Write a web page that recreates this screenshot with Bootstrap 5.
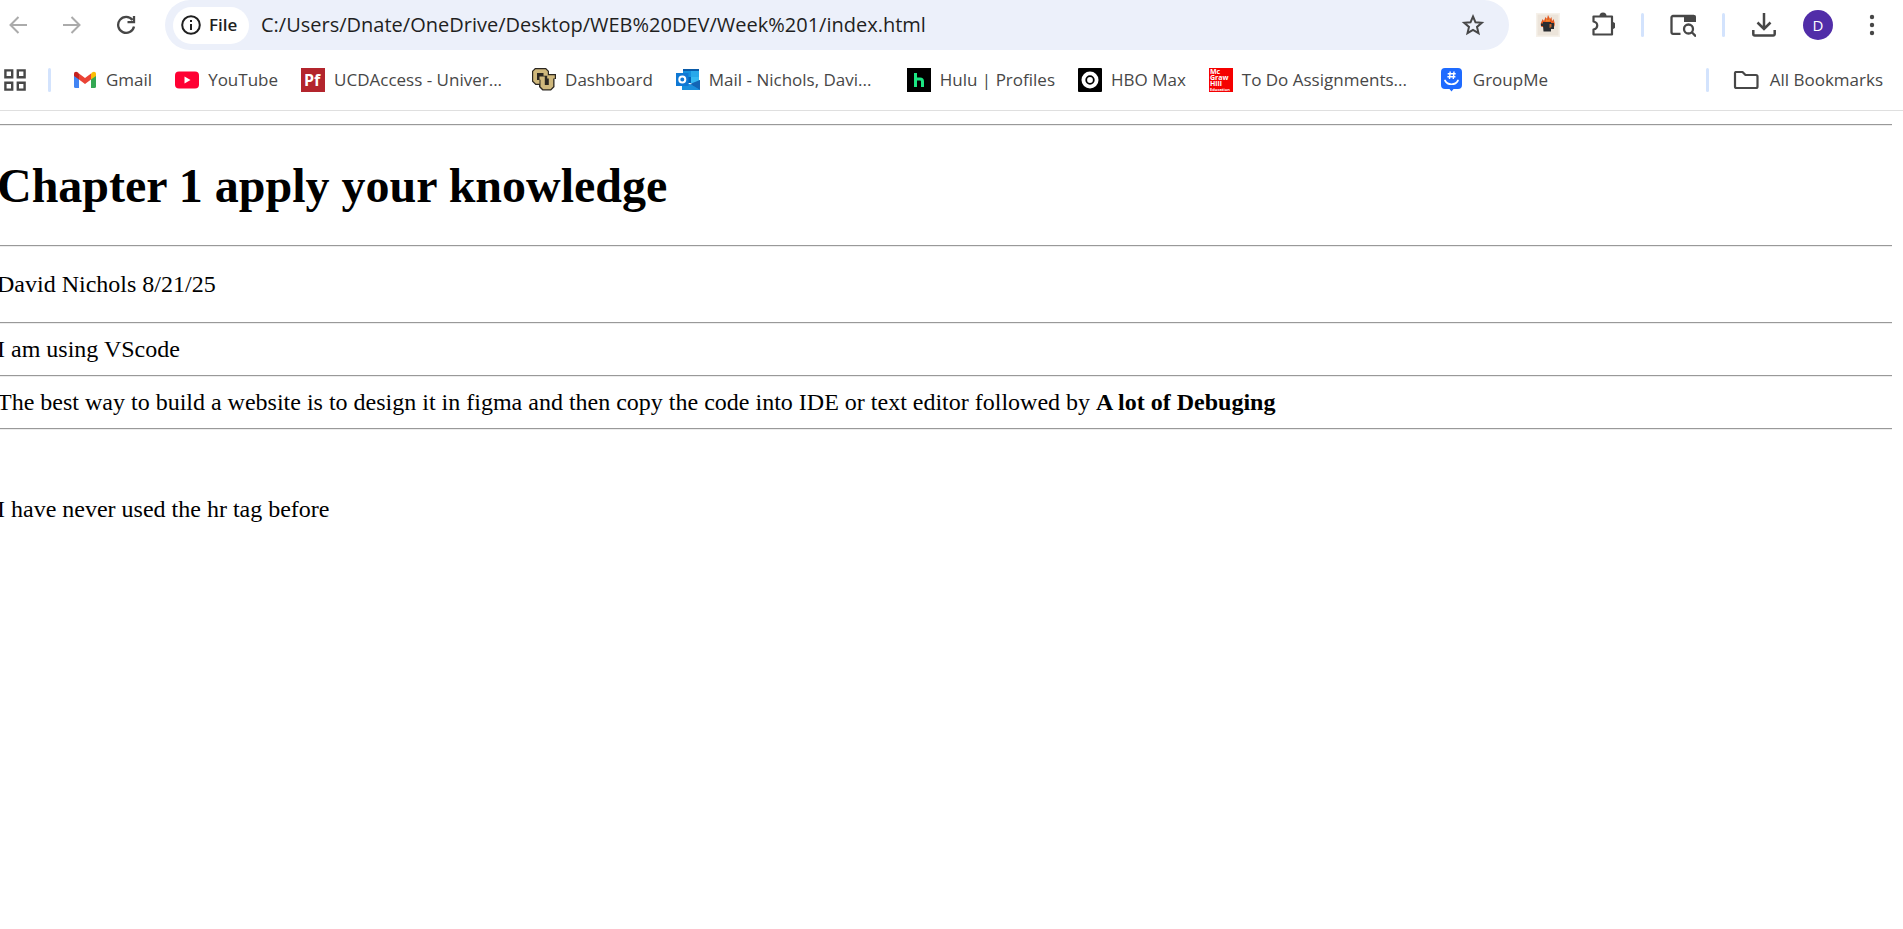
<!DOCTYPE html>
<html lang="en">
<head>
<meta charset="utf-8">
<meta name="viewport" content="width=device-width, initial-scale=1">
<title>index.html</title>
<link href="https://cdn.jsdelivr.net/npm/bootstrap@5.3.0/dist/css/bootstrap.min.css" rel="stylesheet">
<style>
  body { font-family: "Open Sans", "Noto Sans", sans-serif; color: #000; background: #fff; overflow-x: hidden; }
  .toolbar { height: 50px; padding-right: 4px; }
  .nav-keys { gap: 18px; margin-right: 21px; }
  .tool { width: 54px; height: 50px; padding: 0; border: 0; background: none; color: #474747; display: flex; align-items: center; justify-content: center; }
  .nav-keys .tool { width: 36px; }
  .nav-keys .tool:disabled { color: #ababab; }
  .divider { width: 3px; height: 24px; border-radius: 2px; background: #d3e3fd; flex: none; }
  .toolbar .divider { margin: 0 12px; }
  .omnibox { height: 50px; border-radius: 25px; background: #ecf0fa; padding-left: 8px; margin-right: 12px; min-width: 0; }
  .chip { height: 37px; width: 76px; border: 0; border-radius: 19px; background: #fff; color: #1f1f1f; font-size: 17px; font-weight: 600; padding: 0 8px; gap: 8px; flex: none; }
  .url { border: 0; background: none; outline: 0; font-size: 20px; color: #1f1f1f; padding: 0 0 2px; margin-left: 12px; min-width: 0; height: 48px; }
  .omnibox .tool { width: 72px; flex: none; }
  .avatar { width: 30px; height: 30px; background: #512da8; color: #fff; font-size: 15px; line-height: 30px; }
  .bookmarks { height: 61px; border-bottom: 1px solid #dfdfdf; padding: 0 20px 1px 3px; }
  .bookmarks a { color: #474747; text-decoration: none; font-size: 17px; line-height: 24px; gap: 9px; white-space: nowrap; }
  .bookmarks .folder { gap: 11px; }
  .bookmarks .apps { margin-right: 21px; }
  .marks { gap: 23px; margin-left: 22px; }
  .marks .long { width: 208px; }
  .bookmarks svg { flex: none; }
  .document { font-family: "Liberation Serif", "Times New Roman", serif; font-size: 24px; line-height: 27px; margin: 0 11px 0 -3px; padding-top: 1px; }
  .document hr { margin: 12px 0; border: 0; border-top: 1px solid #999; border-bottom: 1px solid #ededed; height: 2px; opacity: 1; }
  .document h1 { font-size: 48px; font-weight: 700; line-height: 55px; margin: 32px 0; }
  .document p { margin: 24px 0; }
</style>
</head>
<body>
<header>
  <div class="toolbar d-flex align-items-center">
    <div class="nav-keys d-flex">
      <button class="tool" disabled aria-label="Back"><svg width="18" height="18" viewBox="0 0 18 18" fill="none" stroke="currentColor" stroke-width="2"><path d="M18 9H1.500M9.500 1 1.500 9l8 8"/></svg></button>
      <button class="tool" disabled aria-label="Forward"><svg width="18" height="18" viewBox="0 0 18 18" fill="none" stroke="currentColor" stroke-width="2"><path d="M0 9h16.500M8.500 1l8 8-8 8"/></svg></button>
      <button class="tool" aria-label="Reload"><svg width="20" height="20" viewBox="0 0 20 20" fill="none" stroke="currentColor" stroke-width="2.300"><path d="M16.500 5A8 8 0 1 0 18 11.500M18 1v6.200h-6.500"/></svg></button>
    </div>
    <div class="omnibox d-flex align-items-center flex-grow-1">
      <button class="chip d-flex align-items-center"><svg width="20" height="20" viewBox="0 0 20 20" fill="none" stroke="currentColor" stroke-width="2"><circle cx="10" cy="10" r="8.800"/><path d="M10 9v6M10 5v2"/></svg>File</button>
      <input class="url flex-grow-1" type="text" aria-label="Address" value="C:/Users/Dnate/OneDrive/Desktop/WEB%20DEV/Week%201/index.html">
      <button class="tool" aria-label="Bookmark this page"><svg width="24" height="24" viewBox="0 0 24 24" fill="none" stroke="currentColor" stroke-width="2"><path d="M12 3.500l2.500 5.800 6.300.5-4.800 4.100 1.500 6.200-5.500-3.300-5.500 3.300L8 13.900 3.200 9.800l6.300-.5z"/></svg></button>
    </div>
    <button class="tool" aria-label="Extension"><svg width="24" height="24" viewBox="0 0 24 24"><path fill="#f6f1ea" d="M0 0h24v24H0z"/><path fill="#ece4da" d="M1.500 1.500h21v21h-21z"/><path fill="#e2571f" d="M5.500 14C3.500 10 6 9 6.500 6l1.500 2 1.500-4 1.500 2 1-4 2 4 1.500-2 .5 4 2-2c-.5 3 2 4 0 8z"/><path fill="#f58a2c" d="M9.500 8.500l1-3 1.500 2 1.500-2 .5 3z"/><path fill="#2a2d31" d="M7 9h8v1h3v6h-3v2.500H7.500L7 13H5v-2.500h2z"/><path fill="#c9682c" d="M13.500 11h2v3l-2 1z"/></svg></button>
    <button class="tool" aria-label="Extensions"><svg width="26" height="26" viewBox="-2 1 26 26"><path fill="none" stroke="currentColor" stroke-width="2.200" stroke-linejoin="round" d="M2.500 5.500h18.500v18H2.500v-5c5-1 5-7 0-8z"/><path fill="currentColor" d="M8.500 5a3.500 3.500 0 0 1 7 0zM21 11a3.500 3.500 0 0 1 0 7z"/></svg></button>
    <span class="divider"></span>
    <button class="tool" aria-label="Search tabs"><svg width="26" height="24" viewBox="0 0 26 24" fill="none" stroke="currentColor" stroke-width="2.300"><path d="M10.500 20.800H3a1.500 1.500 0 0 1-1.500-1.500V4.500A1.500 1.500 0 0 1 3 3h21"/><path fill="currentColor" stroke="none" d="M14 2h10.500A1.500 1.500 0 0 1 26 3.500V9H14z"/><circle cx="18.500" cy="16" r="4.500"/><path d="M21.800 19.300 26 23.500"/></svg></button>
    <span class="divider"></span>
    <button class="tool" aria-label="Downloads"><svg width="24" height="24" viewBox="0 0 24 24" fill="none" stroke="currentColor" stroke-width="2.500"><path d="M12 0v15.500M5.500 9.500l6.500 6.500 6.500-6.500M1.300 17v4a1.500 1.500 0 0 0 1.500 1.500h18.400a1.500 1.500 0 0 0 1.500-1.500v-4"/></svg></button>
    <button class="tool" aria-label="Profile"><span class="avatar rounded-circle">D</span></button>
    <button class="tool" aria-label="Menu"><svg width="6" height="22" viewBox="0 0 6 22" fill="currentColor"><circle cx="3" cy="3" r="2.200"/><circle cx="3" cy="11" r="2.200"/><circle cx="3" cy="19" r="2.200"/></svg></button>
  </div>
  <nav class="bookmarks d-flex align-items-center" aria-label="Bookmarks">
    <a href="#" aria-label="Apps" class="apps d-flex"><svg width="24" height="24" viewBox="0 0 24 24" fill="none" stroke="#474747" stroke-width="2.400"><path d="M2.400 2.400h6.800v6.800H2.400zM14.800 2.400h6.800v6.800h-6.800zM2.400 14.800h6.800v6.800H2.400zM14.800 14.800h6.800v6.800h-6.800z"/></svg></a>
    <span class="divider"></span>
    <div class="marks d-flex align-items-center">
      <a href="#" class="d-flex"><svg width="24" height="24" viewBox="0 0 24 24"><path fill="#4285f4" d="M1 7l5 3.500V20H2.500A1.500 1.500 0 0 1 1 18.500z"/><path fill="#34a853" d="M23 7l-5 3.500V20h3.500a1.500 1.500 0 0 0 1.500-1.500z"/><path fill="#ea4335" d="M6 5.500l6 4.500 6-4.500v6L12 16l-6-4.500z"/><path fill="#c5221f" d="M1 8V6c0-2 2-3 4-1.500l1 1v6z"/><path fill="#fbbc04" d="M23 8V6c0-2-2-3-4-1.500l-1 1v6z"/></svg>Gmail</a>
      <a href="#" class="d-flex"><svg width="24" height="24" viewBox="0 0 24 24"><rect y="3.500" width="24" height="17" rx="4" fill="#ff0033"/><path fill="#fff" d="M9.500 8.500v7l6-3.500z"/></svg>YouTube</a>
      <a href="#" class="d-flex long"><svg width="24" height="24" viewBox="0 0 24 24"><path fill="#b3252d" d="M0 0h24v24H0z"/><text x="3" y="18" font-family="Open Sans, sans-serif" font-size="16" font-weight="700" fill="#fff">Pf</text></svg>UCDAccess - Univer...</a>
      <a href="#" class="d-flex"><svg width="24" height="24" viewBox="0 0 24 24"><path fill="#2b2721" d="M3 0h11l3 3v3h7v5h-1.500v8L19 22.500h-8.500L7 19v-2H3.500L0 13.500V3z"/><path fill="#cfb87c" d="M3.500 1.200h10l2.300 2.300v4.300h-4.300V5H5v7h2.500v3.800H4L1.200 13V3.500z"/><path fill="#cfb87c" d="M7.500 8.500h5.300v8.500h4V10.500h-1.600V7.200h7.600v3.300h-1.600v8l-2.700 2.700h-7.300l-2.700-2.700v-6.700h-1z"/></svg>Dashboard</a>
      <a href="#" class="d-flex long"><svg width="24" height="24" viewBox="0 0 24 24"><path fill="#0a5ba8" d="M7 1h16v13H7z"/><path fill="#1490df" d="M7 3h8v6H7z"/><path fill="#28a8ea" d="M15 3h8v6h-8z"/><path fill="#35b8f1" d="M15 9h8v6h-8z"/><path fill="#0364b8" d="M7 9h8v6H7z"/><path fill="#1490df" d="M6 12l9 5 9-5v10H6z"/><path fill="#1366b5" d="M24 12v10L14 16z"/><path fill="#1b8fdc" d="M6 22h18l-10-6z"/><path fill="#0f78d4" d="M0 5h12.500v13H0z"/><circle cx="6.300" cy="11.500" r="3" fill="none" stroke="#fff" stroke-width="2"/></svg>Mail - Nichols, Davi...</a>
      <a href="#" class="d-flex"><svg width="24" height="24" viewBox="0 0 24 24"><path d="M0 0h24v24H0z"/><path fill="none" stroke="#1ce783" stroke-width="3" d="M8.500 5v14M8.500 11h4.500a2.500 2.500 0 0 1 2.500 2.500V19"/></svg>Hulu | Profiles</a>
      <a href="#" class="d-flex"><svg width="24" height="24" viewBox="0 0 24 24"><rect width="24" height="24" rx="1"/><circle cx="12" cy="12" r="8.500" fill="#fff"/><circle cx="12" cy="12" r="3.800" fill="#fff" stroke="#000" stroke-width="1.800"/></svg>HBO Max</a>
      <a href="#" class="d-flex long"><svg width="24" height="24" viewBox="0 0 24 24"><path fill="#f50000" d="M0 0h24v24H0z"/><g fill="#fff" font-family="Open Sans, sans-serif" font-weight="700" font-size="7"><text x="1" y="6">Mc</text><text x="1" y="12">Graw</text><text x="1" y="18">Hill</text><text x="1" y="23" font-size="4">Education</text></g></svg>To Do Assignments...</a>
      <a href="#" class="d-flex"><svg width="24" height="24" viewBox="0 0 24 24"><path fill="#1f6bff" d="M5 0h13a4 4 0 0 1 4 4v13a4 4 0 0 1-4 4h-4.500l-2 2.500-2-2.500H5a4 4 0 0 1-4-4V4a4 4 0 0 1 4-4z"/><path fill="none" stroke="#fff" stroke-width="1.400" d="M10.200 3.500 9.500 11M14 3.500l-.7 7.500M7.700 5.800h8M7.400 8.800h8"/><path fill="none" stroke="#fff" stroke-width="1.700" stroke-linecap="round" d="M5 12.500c2.500 5 10.500 5 13 0"/></svg>GroupMe</a>
    </div>
    <span class="divider ms-auto me-4"></span>
    <a href="#" class="folder d-flex"><svg width="26" height="24" viewBox="0 0 26 24" fill="none" stroke="#474747" stroke-width="2.200" stroke-linejoin="round"><path d="M2.500 4h7l3 3H23a1.500 1.500 0 0 1 1.500 1.500v10A1.500 1.500 0 0 1 23 20H3.500A1.500 1.500 0 0 1 2 18.500V5z"/></svg>All Bookmarks</a>
  </nav>
</header>
<main class="document">
  <hr>
  <h1>Chapter 1 apply your knowledge</h1>
  <hr>
  <p>David Nichols 8/21/25</p>
  <hr>
  I am using VScode
  <hr>
  The best way to build a website is to design it in figma and then copy the code into IDE or text editor followed by <b>A lot of Debuging</b>
  <hr>
  <br>
  <br>
  I have never used the hr tag before
</main>
<script src="https://cdn.jsdelivr.net/npm/bootstrap@5.3.0/dist/js/bootstrap.bundle.min.js"></script>
</body>
</html>
